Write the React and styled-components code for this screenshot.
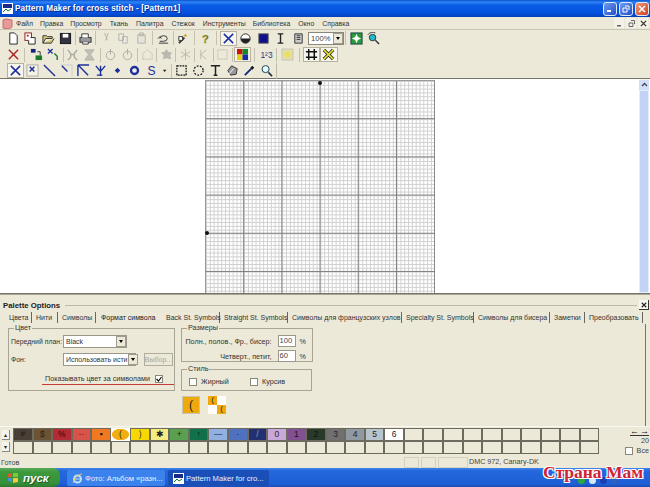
import React from "react";
import styled, { createGlobalStyle } from "styled-components";

const GlobalStyle = createGlobalStyle`
  html, body { margin: 0; padding: 0; background: #ece9d8; }
  body { font-family: "Liberation Sans", Arial, sans-serif; font-size: 8px; color: #222; }
`;

const Screen = styled.div`
  position: relative;
  width: 650px;
  height: 487px;
  overflow: hidden;
  display: flex;
  flex-direction: column;
  background: #ece9d8;
`;

const TitleBar = styled.div`
  height: 17px;
  flex: none;
  display: flex;
  align-items: center;
  padding: 0 1px 0 2px;
  gap: 2px;
  background: linear-gradient(180deg, #0a50d0 0%, #2f86f4 12%, #0a5ce6 30%, #0450dc 80%, #0340b4 100%);
`;
const TitleText = styled.div`
  flex: 1;
  color: #fff;
  font-weight: bold;
  font-size: 8.2px;
  letter-spacing: 0.1px;
  text-shadow: 1px 1px 0 #0a2a90;
`;
const WinBtn = styled.div`
  width: 14px;
  height: 14px;
  box-sizing: border-box;
  border: 1px solid #dfe8fa;
  border-radius: 3px;
  background: ${(p) => (p.$close ? "linear-gradient(135deg,#ef9a7c,#d0401c)" : "linear-gradient(135deg,#6f9cf0,#2250c8)")};
  display: flex;
  align-items: center;
  justify-content: center;
`;

const MenuBar = styled.div`
  height: 12px;
  flex: none;
  display: flex;
  align-items: center;
  padding: 0 2px;
`;
const MenuItem = styled.span`
  font-size: 6.9px;
  color: #333;
  margin-left: ${(p) => p.$gap || 9}px;
`;
const MdiBtns = styled.div`
  margin-left: auto;
  display: flex;
  gap: 2px;
`;
const MdiBtn = styled.div`
  width: 10px;
  height: 10px;
  background: #f4f2e8;
  display: flex;
  align-items: center;
  justify-content: center;
`;

const Toolbars = styled.div`
  flex: none;
  height: 50px;
  box-sizing: border-box;
  border-top: 1px solid #c8c5b4;
  border-bottom: 1px solid #77756a;
`;
const ToolRow = styled.div`
  height: 16.4px;
  display: flex;
  align-items: center;
  padding-left: ${(p) => p.$pad}px;
`;
const RowEnd = styled.div`
  align-self: stretch;
  width: 1px;
  margin-left: 1px;
  background: #bdbaa8;
`;
const Tool = styled.div`
  width: ${(p) => p.$w || 17.5}px;
  height: 15px;
  flex: none;
  box-sizing: border-box;
  display: flex;
  align-items: center;
  justify-content: center;
  ${(p) => p.$on && "background:#f6f5ee;box-shadow:inset 0 0 0 1px #b5b2a0;"}
  ${(p) => p.$off && "opacity:.42;"}
`;
const Sep = styled.div`
  width: ${(p) => p.$w}px;
  height: 14px;
  flex: none;
  display: flex;
  justify-content: center;
  &::before { content: ""; width: 1px; flex: none; background: #c4c1b0; }
`;
const ZoomCombo = styled.div`
  width: 36px;
  height: 13px;
  margin-left: 1px;
  flex: none;
  box-sizing: border-box;
  background: #fff;
  border: 1px solid #8a887a;
  display: flex;
  align-items: center;
  justify-content: space-between;
  font-size: 7.6px;
  padding-left: 2px;
  color: #444;
`;
const ComboArrow = styled.div`
  width: 10px;
  align-self: stretch;
  flex: none;
  background: #ece9d8;
  box-shadow: inset 0 0 0 1px #a09d8e;
  display: flex;
  align-items: center;
  justify-content: center;
  &::before { content: ""; border: 2px solid transparent; border-top: 3px solid #000; border-bottom: 0; }
`;

const Workspace = styled.div`
  flex: none;
  height: 215px;
  display: flex;
  background: #fff;
  border-bottom: 1px solid #77756a;
  box-sizing: border-box;
`;
const CanvasArea = styled.div`
  flex: 1;
  display: flex;
  justify-content: center;
  padding: 1px 0 0 0;
  overflow: hidden;
`;
const Canvas = styled.div`
  position: relative;
  width: 229px;
  height: 260px;
  flex: none;
  border-left: 1px solid #999;
  border-top: 1px solid #999;
  background-color: #fff;
  background-image:
    linear-gradient(to right, #7c7c7c 1px, transparent 1px),
    linear-gradient(to bottom, #7c7c7c 1px, transparent 1px),
    linear-gradient(to right, #d0d0d0 1px, transparent 1px),
    linear-gradient(to bottom, #d0d0d0 1px, transparent 1px);
  background-size: 38.2px 38.2px, 38.2px 38.2px, 3.82px 3.82px, 3.82px 3.82px;
  background-position: 37.2px 0, 0 37.2px, 0 0, 0 0;
`;
const Mark = styled.div`
  position: absolute;
  left: ${(p) => p.$x}px;
  top: ${(p) => p.$y}px;
  width: 4px;
  height: 4px;
  border-radius: 50%;
  background: #111;
`;
const ScrollBar = styled.div`
  width: 10px;
  flex: none;
  margin-right: 1px;
  padding-top: 1px;
  display: flex;
  flex-direction: column;
  background: #f4f4ee;
`;
const ScrollBtn = styled.div`
  height: 10px;
  flex: none;
  background: #d2dff8;
  display: flex;
  align-items: center;
  justify-content: center;
`;
const ScrollThumb = styled.div`
  flex: 1;
  background: #c3d3f6;
  border: 1px solid #e6edfb;
`;

const Panel = styled.div`
  flex: none;
  height: 162px;
  display: flex;
  flex-direction: column;
  position: relative;
`;
const PanelHead = styled.div`
  height: 16px;
  flex: none;
  display: flex;
  align-items: center;
  padding: 5px 1px 0 3px;
  box-sizing: border-box;
  border-top: 1px solid #a9a698;
`;
const PanelTitle = styled.div`
  font-weight: bold;
  font-size: 7.8px;
  color: #222;
`;
const Groove = styled.div`
  flex: 1;
  height: 1px;
  margin: 0 2px 0 5px;
  background: #bcb9a8;
`;
const PanelClose = styled.div`
  width: 9px;
  height: 9px;
  border-bottom: 1px solid #333;
  border-right: 1px solid #333;
  background: #f7f6f0;
  display: flex;
  align-items: center;
  justify-content: center;
`;
const Tabs = styled.div`
  height: 14px;
  flex: none;
  display: flex;
  align-items: center;
  padding-left: 5px;
  box-sizing: border-box;
`;
const Tab = styled.div`
  font-size: 7px;
  height: 11px;
  line-height: 11px;
  width: ${(p) => p.$w}px;
  flex: none;
  box-sizing: border-box;
  padding-left: 4px;
  white-space: nowrap;
  color: #333;
  border-right: 1px solid #666;
  ${(p) => p.$active && "border-right:0;padding-left:5px;color:#222;"}
`;
const TabBody = styled.div`
  flex: 1;
  display: flex;
  gap: 6px;
  padding: 0 0 0 8px;
  margin-right: 4px;
  border-right: 1px solid #77756a;
`;
const Group = styled.fieldset`
  margin: 0;
  padding: 0;
  box-sizing: border-box;
  min-width: 0;
  border: 1px solid #a8a594;
  width: ${(p) => p.$w}px;
  height: ${(p) => p.$h}px;
  flex: none;
  display: flex;
  flex-direction: column;
  & > legend {
    font-size: 7.2px;
    line-height: 8px;
    padding: 0 1px;
    margin-left: 5px;
    color: #333;
  }
`;
const ColorRow = styled.div`
  display: flex;
  align-items: center;
  height: 13px;
  margin-top: ${(p) => p.$mt}px;
  padding-left: 2px;
`;
const FieldLabel = styled.div`
  width: 52px;
  flex: none;
  font-size: 6.9px;
  color: #333;
  white-space: nowrap;
`;
const Select = styled.div`
  width: ${(p) => p.$w}px;
  height: 13px;
  flex: none;
  box-sizing: border-box;
  background: #fff;
  border: 1px solid #9a9888;
  display: flex;
  align-items: center;
  justify-content: space-between;
  padding-left: 2px;
  font-size: 7px;
  color: #333;
  white-space: nowrap;
`;
const GhostButton = styled.div`
  width: 29px;
  height: 13px;
  margin-left: 8px;
  box-sizing: border-box;
  border: 1px solid #b0ad9c;
  background: #ece9d8;
  color: #aaa798;
  font-size: 7px;
  display: flex;
  align-items: center;
  justify-content: center;
`;
const ShowRow = styled.div`
  margin: 7px 0 0 33px;
  width: 132px;
  height: 12px;
  box-sizing: border-box;
  display: flex;
  align-items: center;
  gap: 5px;
  padding-left: 3px;
  border-bottom: 1px solid #c83a3a;
  font-size: 7.2px;
  color: #333;
  white-space: nowrap;
`;
const Check = styled.div`
  width: 8px;
  height: 8px;
  flex: none;
  box-sizing: border-box;
  background: #fff;
  border: 1px solid #8a887a;
  display: flex;
  align-items: center;
  justify-content: center;
`;
const Column = styled.div`
  display: flex;
  flex-direction: column;
  gap: 3px;
  align-items: flex-start;
`;
const SizeRow = styled.div`
  display: flex;
  align-items: center;
  justify-content: flex-end;
  height: 12px;
  padding-right: 6px;
  margin-top: 3px;
  font-size: 7.2px;
  color: #333;
  white-space: nowrap;
`;
const NumInput = styled.div`
  width: 18px;
  height: 12px;
  margin: 0 4px 0 6px;
  box-sizing: border-box;
  background: #fff;
  border: 1px solid #9a9888;
  padding-left: 1px;
  font-size: 7.6px;
  line-height: 10px;
  color: #444;
`;
const StyleRow = styled.div`
  display: flex;
  align-items: center;
  height: 13px;
  margin-top: 2px;
  padding-left: 7px;
  font-size: 7.2px;
  color: #333;
`;
const StyleOpt = styled.div`
  width: 61px;
  display: flex;
  align-items: center;
  gap: 4px;
`;
const Previews = styled.div`
  display: flex;
  gap: 8px;
  margin-left: 1px;
  margin-top: 2px;
`;
const PreviewSolid = styled.div`
  width: 18px;
  height: 18px;
  background: #f0a90c;
  border: 1px solid #c8c5b4;
  box-sizing: border-box;
  display: flex;
  align-items: center;
  justify-content: center;
  font-size: 12px;
  color: #222;
`;
const PreviewChecks = styled.div`
  width: 18px;
  height: 18px;
  display: grid;
  grid-template-columns: 1fr 1fr;
  grid-template-rows: 1fr 1fr;
  font-size: 8px;
  line-height: 8px;
  text-align: center;
  color: #222;
`;
const Checker = styled.div`
  background: ${(p) => (p.$on ? "#f0a90c" : "#fff")};
`;

const Strip = styled.div`
  flex: none;
  height: 30px;
  display: flex;
  padding: 1px 1px 0 2px;
  box-sizing: border-box;
  border-top: 1px solid #f8f7f0;
`;
const StripArrows = styled.div`
  width: 8px;
  height: 26px;
  margin-right: 3px;
  display: flex;
  flex-direction: column;
  justify-content: space-between;
  padding: 2px 0;
  box-sizing: border-box;
`;
const StripArrow = styled.div`
  height: 9px;
  background: #f5f4ec;
  border-right: 1px solid #888;
  border-bottom: 1px solid #888;
  display: flex;
  align-items: center;
  justify-content: center;
  font-size: 6px;
  line-height: 6px;
`;
const CellGrid = styled.div`
  display: grid;
  grid-template-columns: repeat(30, 19.55px);
  grid-auto-rows: 13px;
`;
const Cell = styled.div`
  box-sizing: border-box;
  border: 1px solid #6d6a5e;
  background: ${(p) => p.$bg || "#ece9d8"};
  color: ${(p) => p.$fg || "#222"};
  font-size: 8.5px;
  line-height: 11px;
  text-align: center;
  ${(p) => p.$sel && "border:0;background:radial-gradient(ellipse 9px 6px at center,#f2ae10 90%,#fff 100%);line-height:13px;"}
`;
const StripSide = styled.div`
  flex: 1;
  display: flex;
  flex-direction: column;
  align-items: flex-end;
  font-size: 7.2px;
  line-height: 8px;
  color: #444;
`;
const SideArrows = styled.div`
  display: flex;
  gap: 1px;
  font-size: 9px;
  font-weight: bold;
  line-height: 7px;
  color: #111;
  border-bottom: 1px solid #333;
  margin-bottom: 1px;
`;
const SideCheck = styled.div`
  display: flex;
  align-items: center;
  gap: 4px;
  margin-top: 2px;
`;

const StatusBar = styled.div`
  flex: none;
  height: 12px;
  display: flex;
  align-items: center;
  font-size: 7.2px;
  color: #444;
  padding-left: 1px;
`;
const StatusText = styled.div`
  width: 403px;
  flex: none;
`;
const StatusCell = styled.div`
  width: ${(p) => p.$w}px;
  height: 11px;
  margin-right: 2px;
  flex: none;
  box-sizing: border-box;
  border: 1px solid #d4d1c0;
  white-space: nowrap;
  line-height: 10px;
  ${(p) => p.$plain && "border:0;margin-left:-1px;"}
`;

const Taskbar = styled.div`
  flex: none;
  height: 19px;
  display: flex;
  align-items: stretch;
  background: linear-gradient(180deg, #3f86ee 0%, #2466dc 15%, #1f5fd6 85%, #1a4cb0 100%);
`;
const StartBtn = styled.div`
  width: 60px;
  flex: none;
  display: flex;
  align-items: center;
  gap: 4px;
  padding-left: 7px;
  box-sizing: border-box;
  border-radius: 0 7px 7px 0;
  background: linear-gradient(180deg, #5aa85a 0%, #3c9a3c 20%, #36913a 80%, #2a7a2c 100%);
  color: #fff;
  font-size: 11.5px;
  font-weight: bold;
  font-style: italic;
  text-shadow: 1px 1px 1px #1c4d1c;
`;
const TaskBtn = styled.div`
  width: ${(p) => p.$w}px;
  margin: 2px 0 1px ${(p) => p.$ml}px;
  flex: none;
  box-sizing: border-box;
  border-radius: 2px;
  display: flex;
  align-items: center;
  gap: 2px;
  padding-left: 5px;
  color: #e8f0ff;
  font-size: 7.6px;
  white-space: nowrap;
  background: ${(p) => (p.$on ? "#1b4fb8" : "#3c82ec")};
`;
const Tray = styled.div`
  margin-left: auto;
  width: 76px;
  flex: none;
  display: flex;
  align-items: flex-end;
  justify-content: flex-start;
  gap: 4px;
  padding: 0 0 3px 4px;
  box-sizing: border-box;
`;
const TrayDot = styled.div`
  width: 7px;
  height: 7px;
  border-radius: 50%;
  background: ${(p) => p.$c};
`;
const Watermark = styled.div`
  position: absolute;
  left: 543px;
  top: 462px;
  font-family: "Liberation Serif", serif;
  font-weight: bold;
  font-size: 17.5px;
  line-height: 20px;
  color: #cf2236;
  text-shadow: -1px 0 #fff, 1px 0 #fff, 0 -1px #fff, 0 1px #fff, -1px -1px #fff, 1px 1px #fff, 1px -1px #fff, -1px 1px #fff;
  white-space: nowrap;
`;

const B = "#1c2f9c";
const glyph = {
  doc: <path d="M3 1h5l3 3v9H3z" fill="#fff" stroke="#222" />,
  newcol: (<><rect x="1" y="1" width="7" height="8" fill="#fff" stroke="#8a1a1a" /><rect x="3" y="3" width="2" height="2" fill="#c22" /><path d="M7 6h5v7H5V9" fill="#fff" stroke="#222" /></>),
  open: <path d="M1 12V4h4l1 1h5v2H4l-3 5h9l3-5" fill="#d8c878" stroke="#333" />,
  save: (<><rect x="1.5" y="1.5" width="11" height="11" fill="#334" stroke="#111" /><rect x="4" y="2" width="6" height="4" fill="#fff" /></>),
  print: (<><rect x="1" y="6" width="12" height="5" fill="#999" stroke="#333" /><path d="M3 6V2h7v4M4 11v2h6v-2" fill="#fff" stroke="#333" /></>),
  cut: <path d="M5 1l3 8M9 1L6 9" stroke="#666" fill="none" />,
  copy: <path d="M2 2h5v7H2zM6 5h5v7H6z" fill="#eee" stroke="#666" />,
  paste: <path d="M3 3h8v9H3zM5 1h4v3H5z" fill="#ddd" stroke="#666" />,
  undo: <path d="M3 7a4 3 0 1 1 4 3H3M1 7l2-2 2 2M2 12h10" fill="none" stroke="#333" />,
  wand: (<><path d="M2 12l6-6" stroke="#333" strokeWidth="2" /><path d="M9 2v3M7 4h4" stroke="#c90" /><rect x="2" y="5" width="4" height="4" fill="#fff" stroke="#333" /></>),
  help: <text x="7" y="12" fontSize="12" fontWeight="bold" textAnchor="middle" fill="#556" stroke="#bb2" strokeWidth=".5">?</text>,
  bigx: <path d="M2 2l10 10M12 2L2 12" fill="none" stroke={B} strokeWidth="1.6" />,
  bowl: (<><circle cx="7" cy="7" r="5" fill="#fff" stroke="#222" /><path d="M2 7h10a5 5 0 0 1-10 0z" fill="#222" /></>),
  blue: <rect x="2" y="2" width="10" height="10" fill="#10108a" stroke="#555" />,
  ibeam: <path d="M4 2h6M4 12h6M7 2v10" stroke="#222" strokeWidth="1.5" />,
  note: <path d="M3 2h8v10H3zM5 4h4M5 6h4M5 8h4" fill="#ccc" stroke="#333" />,
  green: (<><rect x="1" y="1" width="12" height="12" fill="#2c9a3c" stroke="#144" /><path d="M7 2l1.5 3.5L12 7 8.5 8.5 7 12 5.5 8.5 2 7 5.5 5.5z" fill="#fff" /></>),
  zoomc: (<><circle cx="6" cy="6" r="3.5" fill="#2bc" stroke="#333" /><path d="M9 9l4 4" stroke="#333" strokeWidth="1.5" /><path d="M1 3a6 6 0 0 1 8-2" stroke="#333" fill="none" /></>),
  redx: <path d="M2 2l10 10M12 2L2 12" stroke="#a22" strokeWidth="1.5" />,
  fillup: (<><rect x="1" y="1" width="5" height="4" fill="#13237a" /><path d="M8 4h3v4" stroke="#333" fill="none" /><rect x="6" y="8" width="7" height="5" fill="#1a7a2a" /></>),
  xarrow: (<><path d="M1 1l5 5M6 1L1 6" stroke={B} strokeWidth="1.4" /><path d="M8 6l3 3v4" stroke="#1a7a2a" strokeWidth="1.5" fill="none" /></>),
  bars: <path d="M2 2l3 4v4L2 13M12 2L9 6v4l3 3M5 7h4" stroke="#555" fill="none" strokeWidth="1.4" />,
  hour: <path d="M2 2h10L8 7l4 6H2l4-6z" fill="#888" stroke="#666" />,
  clock: (<><circle cx="7" cy="8" r="4.5" fill="none" stroke="#555" /><path d="M7 1v6" stroke="#555" /></>),
  dots: <path d="M2 12V6l5-4 5 4v6z" fill="none" stroke="#555" strokeDasharray="1 1" />,
  blob: <path d="M7 1l2 3 4 1-2 3 1 4-5-1-4 1 1-4-3-3 4-1z" fill="#777" />,
  snow: <path d="M7 1v12M2 4l10 6M12 4L2 10" stroke="#777" strokeWidth="1" />,
  kk: <path d="M3 2v10M3 7l6-5M3 7l6 5" stroke="#777" fill="none" />,
  dash: <rect x="2" y="2" width="10" height="10" fill="none" stroke="#555" strokeDasharray="1 1" />,
  colors: (<><rect x="1" y="1" width="6" height="6" fill="#c11" /><rect x="7" y="1" width="6" height="6" fill="#128a28" /><rect x="1" y="7" width="6" height="6" fill="#e8d010" /><rect x="7" y="7" width="6" height="6" fill="#1a2aa8" /></>),
  nums: <text x="7" y="11" fontSize="9" textAnchor="middle" fontFamily="Liberation Sans" fill="#123a8a">1²3</text>,
  sun: (<><rect x="1" y="1" width="12" height="12" fill="#e0ddb0" strokeDasharray="1 1" stroke="#aaa" /><circle cx="7" cy="7" r="3.5" fill="#e8e060" /></>),
  grid: <path d="M4 1v12M10 1v12M1 4h12M1 10h12" stroke="#111" strokeWidth="1.6" />,
  yellowx: <path d="M2 2l10 10M12 2L2 12" stroke="#222" strokeWidth="3.5" />,
  yellowx2: <path d="M2 2l10 10M12 2L2 12" stroke="#e8e030" strokeWidth="1.6" />,
  half: (<><rect x="1" y="1" width="12" height="12" fill="#f4f2e4" stroke="#aaa" /><path d="M4 3l5 5M9 3L4 8" stroke={B} strokeWidth="1.6" /></>),
  diag: <path d="M1 1l12 12" stroke={B} strokeWidth="1.5" />,
  qdiag: (<><path d="M1 1h12v12" fill="none" stroke="#ccc" /><path d="M2 2l6 6" stroke={B} strokeWidth="1.5" /></>),
  three: <path d="M1 1h12M1 1v12M2 2l10 10" fill="none" stroke={B} strokeWidth="1.5" />,
  fork: <path d="M2 2l5 6 5-6M7 2v11M3 12h6" fill="none" stroke={B} strokeWidth="1.5" />,
  dot: <path d="M7 4l3 3-3 3-3-3z" fill={B} />,
  ring: (<><circle cx="7" cy="7" r="3.8" fill="none" stroke={B} strokeWidth="2.5" /><circle cx="7" cy="7" r="1" fill="#fff" /></>),
  sym: <text x="7" y="12" fontSize="13" textAnchor="middle" fontFamily="Liberation Sans" fill={B}>S</text>,
  tiny: <path d="M4 6h5L6.5 9z" fill="#222" />,
  rect: <rect x="2" y="2" width="10" height="10" fill="none" stroke="#111" strokeWidth="1.3" strokeDasharray="2 1" />,
  lasso: <circle cx="7" cy="7" r="5" fill="none" stroke="#111" strokeWidth="1.3" strokeDasharray="2 1.5" />,
  t: <path d="M2 2h10M7 2v10M5 12h4" stroke="#222" strokeWidth="1.6" />,
  pick: (<><path d="M2 7l4-5 6 3-1 6-6 1z" fill="#999" stroke="#333" /><path d="M3 11l5-6" stroke="#fff" /></>),
  dropper: (<><path d="M2 12l7-7" stroke="#13237a" strokeWidth="2" /><path d="M9 3l2 2" stroke="#111" strokeWidth="3" /></>),
  lens: (<><circle cx="6" cy="5.5" r="3.8" fill="#dff" stroke="#234" /><path d="M9 9l4 4" stroke="#234" strokeWidth="1.8" /></>),
};

const Icon = ({ name }) => (
  <svg width="13" height="13" viewBox="0 0 14 14">
    {glyph[name]}
    {name === "yellowx" && glyph.yellowx2}
  </svg>
);

// [icon, separator width before it, flags]
const row1 = [
  ["doc"], ["newcol"], ["open"], ["save"],
  ["print", 2], ["cut", 3.5, "off"], ["copy", 0, "off"], ["paste", 0, "off"],
  ["undo", 4.5], ["wand", 2.5], ["help", 4.5],
  ["bigx", 5.5, "on"], ["bowl"], ["blue"], ["ibeam"], ["note"],
];
const row2 = [
  ["redx"], ["fillup", 5.5], ["xarrow"], ["bars", 1, "off"], ["hour", 0, "off"],
  ["clock", 3, "off"], ["clock", 0, "off"], ["dots", 2, "off"], ["blob", 1.5, "off"],
  ["snow", 1.5, "off"], ["kk", 1.5, "off"], ["dash", 0.5, "off"],
  ["colors", 2.5, "on"], ["nums", 6.5], ["sun", 3.5], ["grid", 6.5, "on"], ["yellowx", 0, "on"],
];
const row3 = [
  ["bigx", 0, "on"], ["half"], ["diag"], ["qdiag"], ["three"], ["fork"], ["dot"], ["ring"], ["sym"],
];
const row3b = [["rect"], ["lasso"], ["t"], ["pick"], ["dropper"], ["lens"]];

const ToolList = ({ items, w }) =>
  items.map(([name, sep, flag], i) => (
    <React.Fragment key={i}>
      {sep ? <Sep $w={sep} /> : null}
      <Tool $w={w} $on={flag === "on"} $off={flag === "off"}>
        <Icon name={name} />
      </Tool>
    </React.Fragment>
  ));

const menus = [
  ["Файл", 3], ["Правка", 7], ["Просмотр", 7], ["Ткань", 8], ["Палитра", 8], ["Стежок", 8],
  ["Инструменты", 8], ["Библиотека", 7], ["Окно", 8], ["Справка", 8],
];

const tabs = [
  ["Цвета", 27], ["Нити", 26], ["Символы", 38], ["Формат символа", 66, true],
  ["Back St. Symbols", 58], ["Straight St. Symbols", 68], ["Символы для французских узлов", 114],
  ["Specialty St. Symbols", 72], ["Символы для бисера", 76], ["Заметки", 35], ["Преобразовать", 58],
];

const swatches = [
  ["#4a3f36", "#", "#1c1712"], ["#6b5334", "$", "#32240e"], ["#b52b33", "%", "#2a0808"], ["#d9534a", "··", "#4a1010"],
  ["#f07820", "▪", "#111"], ["#f2ae10", "(", "#222", true], ["#f8d800", ")", "#333"], ["#f4ec80", "✱", "#222"],
  ["#5ba050", "+", "#0d2a0d"], ["#10704a", "↑", "#022"], ["#8fb0e0", "—", "#223"], ["#5070c0", "·", "#113"],
  ["#203070", "/", "#99a"], ["#c8a8d8", "0", "#323"], ["#805090", "1", "#211"], ["#2a3a2a", "2", "#111"],
  ["#707070", "3", "#222"], ["#9098a0", "4", "#222"], ["#b8c4cc", "5", "#222"], ["#fff", "6", "#222"],
];

const Tick = () => (
  <svg width="6" height="6" viewBox="0 0 6 6"><path d="M0.5 3l2 2 3-4" stroke="#111" fill="none" strokeWidth="1.2" /></svg>
);
const XMark = ({ c = "#fff", s = 8 }) => (
  <svg width={s} height={s} viewBox="0 0 8 8"><path d="M1 1l6 6M7 1L1 7" stroke={c} strokeWidth="1.5" /></svg>
);

export default function App() {
  return (
    <Screen>
      <GlobalStyle />
      <TitleBar>
        <svg width="11" height="11" viewBox="0 0 11 11">
          <rect width="11" height="11" fill="#fff" />
          <rect x="1" y="1" width="9" height="4" fill="#1a2a8a" />
          <path d="M1 9l3-3 2 2 3-2" stroke="#1a7a2a" fill="none" />
        </svg>
        <TitleText>Pattern Maker for cross stitch - [Pattern1]</TitleText>
        <WinBtn>
          <svg width="8" height="8" viewBox="0 0 8 8"><rect x="1" y="5" width="4" height="2" fill="#fff" /></svg>
        </WinBtn>
        <WinBtn>
          <svg width="8" height="8" viewBox="0 0 8 8"><path d="M1 3h4v4H1zM3 1h4v4" fill="none" stroke="#fff" /></svg>
        </WinBtn>
        <WinBtn $close><XMark /></WinBtn>
      </TitleBar>

      <MenuBar>
        <svg width="11" height="11" viewBox="0 0 11 11"><path d="M1 2l3-1 6 1v7l-3 2-6-1z" fill="#e89a9a" stroke="#c86a6a" /></svg>
        {menus.map(([m, g]) => <MenuItem key={m} $gap={g}>{m}</MenuItem>)}
        <MdiBtns>
          <MdiBtn><svg width="7" height="7" viewBox="0 0 7 7"><rect x="1" y="5" width="4" height="1.5" fill="#666" /></svg></MdiBtn>
          <MdiBtn><svg width="7" height="7" viewBox="0 0 7 7"><path d="M1 3h4v3.5H1zM3 .5h3.5V4" fill="none" stroke="#666" /></svg></MdiBtn>
          <MdiBtn><XMark c="#333" s={7} /></MdiBtn>
        </MdiBtns>
      </MenuBar>

      <Toolbars>
        <ToolRow $pad={4.5}>
          <ToolList items={row1} />
          <ZoomCombo>100%<ComboArrow /></ZoomCombo>
          <Sep $w={3.5} />
          <Tool><Icon name="green" /></Tool>
          <Tool><Icon name="zoomc" /></Tool>
        </ToolRow>
        <ToolRow $pad={4.5}>
          <ToolList items={row2} />
        </ToolRow>
        <ToolRow $pad={6.5}>
          <ToolList items={row3} w={17} />
          <Tool $w={10}><Icon name="tiny" /></Tool>
          <Sep $w={3} />
          <ToolList items={row3b} w={17} />
          <RowEnd />
        </ToolRow>
      </Toolbars>

      <Workspace>
        <CanvasArea>
          <Canvas>
            <Mark $x={112} $y={0} />
            <Mark $x={-1} $y={150} />
          </Canvas>
        </CanvasArea>
        <ScrollBar>
          <ScrollBtn>
            <svg width="7" height="6" viewBox="0 0 7 6"><path d="M1 4l2.5-2.5L6 4" stroke="#445" fill="none" strokeWidth="1.3" /></svg>
          </ScrollBtn>
          <ScrollThumb />
        </ScrollBar>
      </Workspace>

      <Panel>
        <PanelHead>
          <PanelTitle>Palette Options</PanelTitle>
          <Groove />
          <PanelClose><XMark c="#222" s={6} /></PanelClose>
        </PanelHead>
        <Tabs>
          {tabs.map(([t, w, a]) => <Tab key={t} $w={w} $active={a}>{t}</Tab>)}
        </Tabs>
        <TabBody>
          <Group $w={167} $h={67}>
            <legend>Цвет</legend>
            <ColorRow $mt={3}>
              <FieldLabel>Передний план:</FieldLabel>
              <Select $w={64}>Black<ComboArrow /></Select>
            </ColorRow>
            <ColorRow $mt={5}>
              <FieldLabel>Фон:</FieldLabel>
              <Select $w={73}>Использовать исти<ComboArrow /></Select>
              <GhostButton>Выбор...</GhostButton>
            </ColorRow>
            <ShowRow>
              Показывать цвет за символами
              <Check><Tick /></Check>
            </ShowRow>
          </Group>
          <Column>
            <Group $w={132} $h={38}>
              <legend>Размеры</legend>
              <SizeRow>Полн., полов., Фр., бисер:<NumInput>100</NumInput>%</SizeRow>
              <SizeRow>Четверт., петит,<NumInput>60</NumInput>%</SizeRow>
            </Group>
            <Group $w={131} $h={26}>
              <legend>Стиль</legend>
              <StyleRow>
                <StyleOpt><Check />Жирный</StyleOpt>
                <StyleOpt><Check />Курсив</StyleOpt>
              </StyleRow>
            </Group>
            <Previews>
              <PreviewSolid>(</PreviewSolid>
              <PreviewChecks>
                <Checker $on>(</Checker>
                <Checker />
                <Checker />
                <Checker $on>(</Checker>
              </PreviewChecks>
            </Previews>
          </Column>
        </TabBody>
        <Strip>
          <StripArrows>
            <StripArrow>▴</StripArrow>
            <StripArrow>▾</StripArrow>
          </StripArrows>
          <CellGrid>
            {swatches.map(([bg, s, fg, sel], i) => (
              <Cell key={i} $bg={bg} $fg={fg} $sel={sel}>{s}</Cell>
            ))}
            {Array.from({ length: 40 }, (_, i) => <Cell key={"e" + i} />)}
          </CellGrid>
          <StripSide>
            <SideArrows><span>←</span><span>→</span></SideArrows>
            20
            <SideCheck><Check />Все</SideCheck>
          </StripSide>
        </Strip>
      </Panel>

      <StatusBar>
        <StatusText>Готов</StatusText>
        <StatusCell $w={15} />
        <StatusCell $w={15} />
        <StatusCell $w={30} />
        <StatusCell $w={120} $plain>DMC  972, Canary-DK</StatusCell>
      </StatusBar>

      <Taskbar>
        <StartBtn>
          <svg width="12" height="12" viewBox="0 0 12 12">
            <path d="M1 2l4-1v4H1z" fill="#e8542a" />
            <path d="M6 1l5 0v4H6z" fill="#7cc83c" />
            <path d="M1 6h4v4l-4-1z" fill="#4a90e0" />
            <path d="M6 6h5v4l-5 1z" fill="#f6c83a" />
          </svg>
          пуск
        </StartBtn>
        <TaskBtn $w={98} $ml={7}>
          <svg width="11" height="11" viewBox="0 0 11 11">
            <circle cx="5.5" cy="6" r="3.5" fill="none" stroke="#bfe0ff" strokeWidth="2" />
            <path d="M2 6h7" stroke="#bfe0ff" />
            <path d="M1 10c2-6 6-9 9-9" stroke="#f0c040" fill="none" />
          </svg>
          Фото: Альбом «разн...
        </TaskBtn>
        <TaskBtn $w={101} $ml={3} $on>
          <svg width="11" height="11" viewBox="0 0 11 11">
            <rect width="11" height="11" fill="#fff" />
            <rect x="1" y="1" width="9" height="4" fill="#1a2a8a" />
            <path d="M1 9l3-3 2 2 3-2" stroke="#1a7a2a" fill="none" />
          </svg>
          Pattern Maker for cro...
        </TaskBtn>
        <Tray>
          <TrayDot $c="#2fa83a" />
          <TrayDot $c="#d8e8f8" />
          <TrayDot $c="#1840b0" />
          <TrayDot $c="#3060c0" />
        </Tray>
      </Taskbar>
      <Watermark>Страна Мам</Watermark>
    </Screen>
  );
}
